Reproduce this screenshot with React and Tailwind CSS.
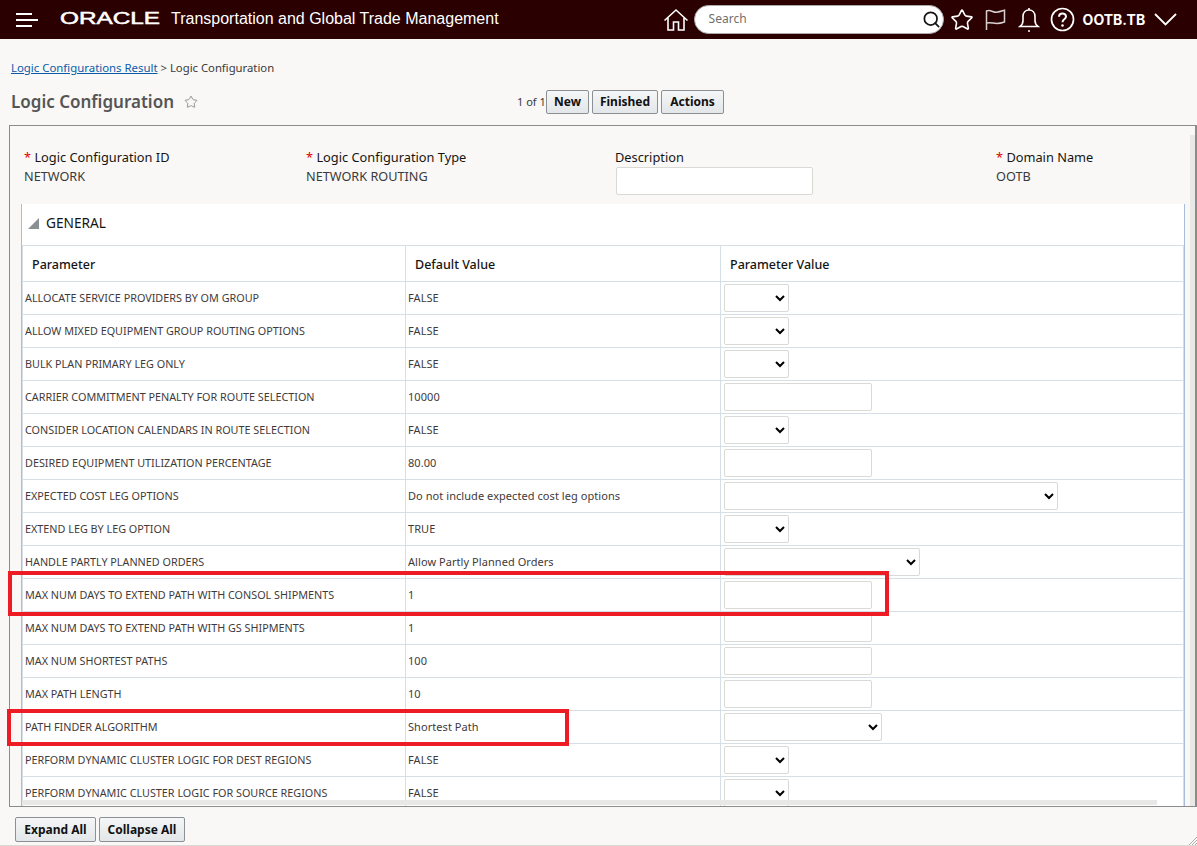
import { Search, Star } from 'lucide-react';

const rows = [
  ['ALLOCATE SERVICE PROVIDERS BY OM GROUP', 'FALSE', 'small'],
  ['ALLOW MIXED EQUIPMENT GROUP ROUTING OPTIONS', 'FALSE', 'small'],
  ['BULK PLAN PRIMARY LEG ONLY', 'FALSE', 'small'],
  ['CARRIER COMMITMENT PENALTY FOR ROUTE SELECTION', '10000', 'input'],
  ['CONSIDER LOCATION CALENDARS IN ROUTE SELECTION', 'FALSE', 'small'],
  ['DESIRED EQUIPMENT UTILIZATION PERCENTAGE', '80.00', 'input'],
  ['EXPECTED COST LEG OPTIONS', 'Do not include expected cost leg options', 'xl'],
  ['EXTEND LEG BY LEG OPTION', 'TRUE', 'small'],
  ['HANDLE PARTLY PLANNED ORDERS', 'Allow Partly Planned Orders', 'lg'],
  ['MAX NUM DAYS TO EXTEND PATH WITH CONSOL SHIPMENTS', '1', 'input'],
  ['MAX NUM DAYS TO EXTEND PATH WITH GS SHIPMENTS', '1', 'input'],
  ['MAX NUM SHORTEST PATHS', '100', 'input'],
  ['MAX PATH LENGTH', '10', 'input'],
  ['PATH FINDER ALGORITHM', 'Shortest Path', 'md'],
  ['PERFORM DYNAMIC CLUSTER LOGIC FOR DEST REGIONS', 'FALSE', 'small'],
  ['PERFORM DYNAMIC CLUSTER LOGIC FOR SOURCE REGIONS', 'FALSE', 'small'],
];

const selectWidths = {
  small: 'w-[65px]',
  md: 'w-[158px]',
  lg: 'w-[196px]',
  xl: 'w-[334px]',
};

const Btn = ({ children, className = '' }) => (
  <button className={`h-[24px] rounded-[2px] border border-[#8a9094] bg-gradient-to-b from-[#f4f6f7] to-[#e3e7e9] text-[12px] font-bold text-[#111] leading-none whitespace-nowrap ${className}`}>
    {children}
  </button>
);

const Control = ({ type }) => {
  if (type === 'input') {
    return <input className="block h-[28px] w-[148px] rounded-[2px] border border-[#d9d9d6] bg-white" />;
  }
  return (
    <select className={`block h-[28px] rounded-[2px] border border-[#d9d9d6] bg-white ${selectWidths[type]}`}>
      <option></option>
    </select>
  );
};

const Field = ({ label, value, required, className }) => (
  <div className={className}>
    <div className="text-[12.8px] leading-[18px] text-[#161513]">
      {required && <span className="text-[#e00000]">* </span>}
      {label}
    </div>
    <div className="text-[12.7px] leading-[20px] text-[#3a3a3a]">{value}</div>
  </div>
);

const Header = () => (
  <div className="h-[39px] shrink-0 bg-[#2a0000] flex items-center text-white">
    <div className="ml-4 w-[22px] flex flex-col gap-[4px]">
      <div className="h-[2px] w-[16px] bg-white" />
      <div className="h-[2px] w-[22px] bg-white" />
      <div className="h-[2px] w-[16px] bg-white" />
    </div>
    <div className="ml-[22px] w-[111px] -mt-[1px] font-['Liberation_Sans',sans-serif] text-[16px] leading-none origin-left scale-x-[1.52] [-webkit-text-stroke:0.5px_white] whitespace-nowrap">
      ORACLE
    </div>
    <div className="-mt-[2px] font-['Liberation_Sans',sans-serif] text-[16px] whitespace-nowrap">
      Transportation and Global Trade Management
    </div>
    <svg className="ml-[164px] shrink-0" width="26" height="24" viewBox="0 0 26 24" fill="none" stroke="white" strokeWidth="1.6">
      <path d="M1.5 12.5 13 2l11.5 10.5M5 10v12h5.5v-8h5v8H21V10" />
    </svg>
    <div className="ml-[5px] h-[29px] w-[250px] rounded-full border border-[#aaa] bg-white flex items-center justify-between pl-[14px] pr-[2px]">
      <span className="-mt-[2px] font-['Noto_Sans',sans-serif] text-[12px] text-[#6f6f6f]">Search</span>
      <Search size={19} strokeWidth={2.2} className="text-[#161513]" />
    </div>
    <Star size={24} strokeWidth={1.6} className="ml-[6px]" />
    <svg className="ml-[11px]" width="22" height="24" viewBox="0 0 22 24" fill="none" stroke="#d8d0d0" strokeWidth="1.5">
      <path d="M1.5 22V3c4-1.800 7 1.800 10 1.200 3-.2 5-1 8-2V14c-3 1-5 1.500-8 1.500S5 14 1.500 15" />
    </svg>
    <svg className="ml-[11px]" width="22" height="26" viewBox="0 0 22 26" fill="none" stroke="white" strokeWidth="1.6">
      <path d="M2 19.500c2-1.500 3-3 3-6V9.500C5 5.500 7.500 3 11 3s6 2.500 6 6.500v4c0 3 1 4.500 3 6z" />
      <circle cx="11" cy="24" r="1" fill="white" stroke="none" />
      <path d="M11 1v2" />
    </svg>
    <svg className="ml-[10px]" width="25" height="25" viewBox="0 0 25 25" fill="none" stroke="white" strokeWidth="1.7">
      <circle cx="12.5" cy="12.500" r="11" />
      <path d="M9 9.800c0-2 1.600-3.300 3.500-3.300s3.500 1.300 3.500 3c0 2.800-3.500 2.700-3.500 5.700" strokeWidth="2" />
      <circle cx="12.500" cy="18.500" r="1.300" fill="white" stroke="none" />
    </svg>
    <div className="ml-[8px] w-[62px] font-['Inter',sans-serif] text-[14px] font-bold whitespace-nowrap">OOTB.TB</div>
    <svg className="ml-[9px]" width="23" height="13" viewBox="0 0 23 13" fill="none" stroke="white" strokeWidth="1.800">
      <path d="M1 1l10.500 10.500L22 1" />
    </svg>
  </div>
);

export default function App() {
  return (
    <div className="relative h-[846px] w-[1197px] overflow-hidden bg-[#f9f8f6] flex flex-col font-['Noto_Sans',sans-serif]">
      <Header />

      <div className="mt-[21px] h-[16px] pl-[11px] text-[11px] leading-[16px] text-[#3a3a3a]">
        <a className="text-[11.4px] text-[#0a5ca8] underline">Logic Configurations Result</a>
        <span className="text-[11.3px]"> &gt; Logic Configuration</span>
      </div>

      <div className="mt-[11px] h-[30px] pl-[11px] flex items-center">
        <div className="w-[506px] flex items-center">
          <span className="text-[17px] font-semibold text-[#555]">Logic Configuration</span>
          <Star size={14} strokeWidth={1.3} className="ml-[10px] text-[#777]" />
        </div>
        <span className="w-[29px] text-[11px] text-[#3a3a3a]">1 of 1</span>
        <div className="flex gap-[3px]">
          <Btn className="w-[43px]">New</Btn>
          <Btn className="w-[66px]">Finished</Btn>
          <Btn className="w-[63px]">Actions</Btn>
        </div>
      </div>

      {/* main panel */}
      <div className="relative ml-[9px] mt-[8px] h-[682px] overflow-hidden border border-[#8c8c8c] border-r-2">
        <div className="flex pl-[14px] pt-[22px] h-[78px]">
          <Field className="w-[282px]" required label="Logic Configuration ID" value="NETWORK" />
          <Field className="w-[309px]" required label="Logic Configuration Type" value="NETWORK ROUTING" />
          <div className="w-[381px]">
            <div className="text-[12.8px] leading-[18px] text-[#161513]">Description</div>
            <input className="mt-[1px] ml-[1px] block h-[28px] w-[197px] rounded-[2px] border border-[#d9d9d6] bg-white" />
          </div>
          <Field required label="Domain Name" value="OOTB" />
        </div>

        <div className="ml-[11px] w-[1164px] border-x border-[#a9bcdc] bg-white">
          <div className="h-[41px] pb-[2px] flex items-center pl-[6px]">
            <div className="w-[11px] h-[11px] bg-[#8a8f94] [clip-path:polygon(100%_0,100%_100%,0_100%)]" />
            <span className="ml-[7px] text-[13.7px] text-[#161513]">GENERAL</span>
          </div>
          <table className="table-fixed w-[1161px] border-collapse">
            <colgroup>
              <col className="w-[383px]" />
              <col className="w-[315px]" />
              <col className="w-[463px]" />
            </colgroup>
            <thead>
              <tr className="h-[36px]">
                <th className="border border-[#d6dfe6] pl-[9px] pt-[4px] text-left text-[12.5px] font-medium text-[#161513]">Parameter</th>
                <th className="border border-[#d6dfe6] pl-[9px] pt-[4px] text-left text-[12.5px] font-medium text-[#161513]">Default Value</th>
                <th className="border border-[#d6dfe6] pl-[9px] pt-[4px] text-left text-[12.5px] font-medium text-[#161513]">Parameter Value</th>
              </tr>
            </thead>
            <tbody>
              {rows.map(([name, def, type]) => (
                <tr key={name} className="h-[33px]">
                  <td className="border border-[#d6dfe6] pl-[2px] pt-[1px] text-[10.8px] text-[#3f3a3a] whitespace-nowrap">{name}</td>
                  <td className="border border-[#d6dfe6] pl-[2px] pt-[1px] text-[11px] tracking-[0.06px] text-[#3f3a3a] whitespace-nowrap">{def}</td>
                  <td className="border border-[#d6dfe6] pl-[3px] py-0">
                    <Control type={type} />
                  </td>
                </tr>
              ))}
            </tbody>
          </table>
        </div>

        {/* scrollbars */}
        <div className="absolute right-0 top-[9px] bottom-0 w-[5px] bg-[#e8e8e6]" />
        <div className="absolute left-[12px] bottom-[1px] h-[5px] w-[1135px] bg-[#e8e8e6]" />
      </div>

      <div className="flex gap-[3px] pl-[15px] pt-[10px]">
        <Btn className="w-[81px] h-[25px]">Expand All</Btn>
        <Btn className="w-[86px] h-[25px]">Collapse All</Btn>
      </div>

      {/* page bottom edge and resize grip */}
      <div className="absolute bottom-0 left-0 right-0 h-px bg-[#d9d9d6]" />
      <svg className="absolute bottom-[1px] right-0" width="8" height="8" viewBox="0 0 8 8" stroke="#999" strokeWidth="0.8">
        <path d="M0 8l8-8M3 8l5-5M6 8l2-2" />
      </svg>

      {/* red annotation boxes */}
      <div className="absolute left-[8px] top-[571px] h-[45px] w-[881px] border-[4px] border-[#ed1c24]" />
      <div className="absolute left-[7px] top-[709px] h-[37px] w-[562px] border-[4px] border-[#ed1c24]" />
    </div>
  );
}
